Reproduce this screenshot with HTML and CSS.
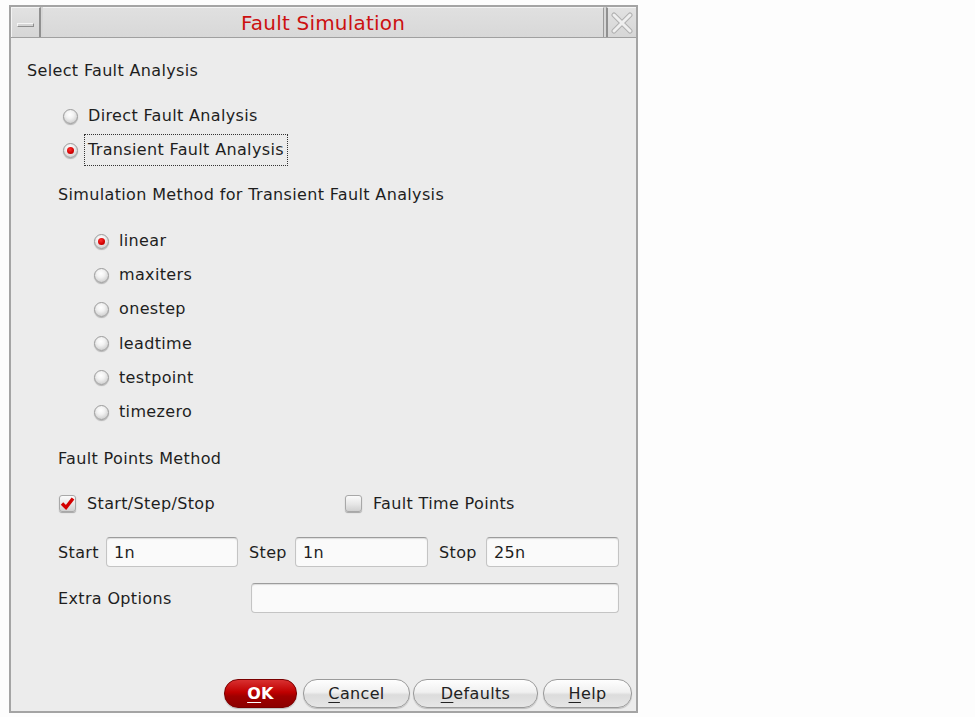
FILE: index.html
```html
<!DOCTYPE html>
<html>
<head>
<meta charset="utf-8">
<title>Fault Simulation</title>
<link rel="stylesheet" href="styles.css">
</head>
<body>
<div class="window">
  <div class="titlebar">
    <div class="tb-btn"><span class="min-glyph"></span></div>
    <div class="tb-title">Fault Simulation</div>
    <div class="tb-btn">
      <svg width="24" height="22" viewBox="0 0 24 22">
        <path d="M4 3 L20 19 M20 3 L4 19" stroke="#b0b0b0" stroke-width="5" stroke-linecap="round" fill="none"/>
        <path d="M4 3 L20 19 M20 3 L4 19" stroke="#efefef" stroke-width="3" stroke-linecap="round" fill="none"/>
      </svg>
    </div>
  </div>
  <div class="content">
    <div class="label-row">Select Fault Analysis</div>
    <div class="radio-group main">
      <div class="radio-row"><span class="radio"></span><span class="rlabel">Direct Fault Analysis</span></div>
      <div class="radio-row"><span class="radio on"></span><span class="rlabel focus">Transient Fault Analysis</span></div>
    </div>
    <div class="label-row section sim">Simulation Method for Transient Fault Analysis</div>
    <div class="radio-group sub">
      <div class="radio-row"><span class="radio on"></span><span class="rlabel">linear</span></div>
      <div class="radio-row"><span class="radio"></span><span class="rlabel">maxiters</span></div>
      <div class="radio-row"><span class="radio"></span><span class="rlabel">onestep</span></div>
      <div class="radio-row"><span class="radio"></span><span class="rlabel">leadtime</span></div>
      <div class="radio-row"><span class="radio"></span><span class="rlabel">testpoint</span></div>
      <div class="radio-row"><span class="radio"></span><span class="rlabel">timezero</span></div>
    </div>
    <div class="label-row section fpm">Fault Points Method</div>
    <div class="check-row">
      <div class="check-item first">
        <span class="check">
          <svg width="17" height="17" viewBox="0 0 17 17"><path d="M3 8.5 L7 12.5 L14 3.5" stroke="#d40000" stroke-width="3.4" fill="none" stroke-linejoin="miter"/></svg>
        </span>
        <span class="clabel">Start/Step/Stop</span>
      </div>
      <div class="check-item">
        <span class="check"></span>
        <span class="clabel">Fault Time Points</span>
      </div>
    </div>
    <div class="field-row">
      <span class="flabel l-start">Start</span><span class="input w132">1n</span>
      <span class="flabel l-step">Step</span><span class="input w133">1n</span>
      <span class="flabel l-stop">Stop</span><span class="input w133">25n</span>
    </div>
    <div class="field-row extra">
      <span class="flabel l-extra">Extra Options</span><span class="input w368"></span>
    </div>
    <div class="spacer"></div>
    <div class="buttons">
      <span class="btn ok"><u>O</u>K</span>
      <span class="btn cancel"><u>C</u>ancel</span>
      <span class="btn defaults"><u>D</u>efaults</span>
      <span class="btn help"><u>H</u>elp</span>
    </div>
  </div>
</div>
</body>
</html>
```
FILE: styles.css
```css
html, body {
  margin: 0;
  padding: 0;
  background: #fdfdfd;
}
body {
  padding: 5px 0 0 9px;
  font-family: "DejaVu Sans", Verdana, sans-serif;
  font-size: 16px;
  letter-spacing: 0.35px;
  color: #1e1e1e;
}
.window {
  width: 629px;
  height: 708px;
  box-sizing: border-box;
  border: 2px solid #a4a4a4;
  background: #ececec;
  display: flex;
  flex-direction: column;
}
.titlebar {
  height: 31px;
  display: flex;
  gap: 2px;
  background: #d6d6d6;
  border-bottom: 1px solid #a0a0a0;
  box-sizing: border-box;
}
.tb-btn {
  width: 30px;
  box-sizing: border-box;
  background: linear-gradient(#e2e2e2, #d6d6d6);
  border-top: 1px solid #f4f4f4;
  border-left: 1px solid #f4f4f4;
  border-right: 2px solid #909090;
  display: flex;
  align-items: center;
  justify-content: center;
}
.tb-btn:first-child {
  padding-top: 4px;
}
.tb-btn:last-child {
  border-left: 2px solid #909090;
  border-right: none;
}
.min-glyph {
  width: 17px;
  height: 4px;
  box-sizing: border-box;
  border: 1px solid #8e8e8e;
  border-top-color: #f6f6f6;
  border-left-color: #f6f6f6;
  background: #d4d4d4;
}
.tb-title {
  flex: 1;
  background: linear-gradient(#e0e0e0, #d8d8d8);
  border-right: 1px solid #9a9a9a;
  border-top: 1px solid #f4f4f4;
  color: #cc1010;
  font-size: 20px;
  letter-spacing: 0.2px;
  display: flex;
  align-items: center;
  justify-content: center;
}
.content {
  flex: 1;
  display: flex;
  flex-direction: column;
  padding: 22px 3px 3px 16px;
}
.label-row {
  height: 20px;
  display: flex;
  align-items: center;
}
.label-row.section {
  margin-left: 31px;
}
.label-row.sim { margin-top: 17px; }
.label-row.fpm { margin-top: 19px; }
.radio-group.main {
  margin-top: 19px;
  padding-left: 36px;
}
.radio-group.sub {
  margin-top: 20px;
  padding-left: 67px;
}
.radio-row {
  height: 34px;
  display: flex;
  align-items: center;
}
.radio-group.sub .radio-row {
  height: 34.2px;
}
.radio {
  width: 15px;
  height: 15px;
  box-sizing: border-box;
  border-radius: 50%;
  border: 1px solid #9c9c9c;
  background: radial-gradient(circle at 45% 35%, #ffffff 0%, #f2f2f2 35%, #d2d2d2 75%, #bcbcbc 100%);
  box-shadow: 0 1px 1px rgba(0,0,0,0.25);
  display: flex;
  align-items: center;
  justify-content: center;
  flex: none;
}
.radio.on::after {
  content: "";
  width: 7px;
  height: 7px;
  border-radius: 50%;
  background: radial-gradient(circle at 40% 35%, #ff3030, #d00000 60%, #a00000);
}
.rlabel {
  margin-left: 6px;
  padding: 6px 3px;
  line-height: 18px;
  border: 1px dotted transparent;
}
.rlabel.focus {
  border-color: #333;
}
.check-row {
  margin-top: 23px;
  height: 24px;
  display: flex;
  align-items: center;
  padding-left: 32px;
}
.check-item {
  display: flex;
  align-items: center;
}
.check-item.first {
  width: 286px;
}
.check {
  width: 17px;
  height: 17px;
  box-sizing: border-box;
  border-radius: 3px;
  border: 1px solid #a8a8a8;
  background: linear-gradient(#fbfbfb, #e6e6e6 55%, #d0d0d0);
  box-shadow: 0 1px 1px rgba(0,0,0,0.3);
  position: relative;
  flex: none;
}
.check svg {
  position: absolute;
  left: -1px;
  top: -1px;
}
.clabel {
  margin-left: 11px;
}
.field-row {
  margin-top: 22px;
  height: 30px;
  display: flex;
  align-items: center;
  padding-left: 31px;
}
.field-row.extra {
  margin-top: 16px;
}
.flabel {
  box-sizing: border-box;
}
.l-start { width: 48px; }
.l-step { width: 46px; margin-left: 11px; }
.l-stop { width: 47px; margin-left: 11px; }
.l-extra { width: 193px; }
.input {
  height: 30px;
  box-sizing: border-box;
  border: 1px solid #c4c4c4;
  border-top-color: #9c9c9c;
  border-radius: 4px;
  background: #fafafa;
  box-shadow: inset 0 1px 1px rgba(0,0,0,0.12);
  padding-left: 7px;
  display: flex;
  align-items: center;
}
.w132 { width: 132px; }
.w133 { width: 133px; }
.w368 { width: 368px; }
.spacer { flex: 1; }
.buttons {
  display: flex;
  justify-content: flex-end;
  gap: 5px;
  height: 29px;
  padding-right: 1px;
}
.btn {
  height: 29px;
  box-sizing: border-box;
  border-radius: 14px;
  border: 1px solid #9a9a9a;
  background: linear-gradient(#fefefe, #f0f0f0 45%, #dcdcdc 55%, #e6e6e6);
  box-shadow: 0 1px 1px rgba(0,0,0,0.2);
  display: flex;
  align-items: center;
  justify-content: center;
  color: #222;
}
.btn u {
  text-underline-offset: 3px;
}
.btn.ok {
  width: 73px;
  border-color: #7a0000;
  background: linear-gradient(#d83030, #c00000 45%, #a00000 60%, #8c0000);
  color: #fff;
  font-weight: bold;
}
.btn.cancel { width: 107px; margin-left: 1px; }
.btn.defaults { width: 125px; margin-left: -2px; }
.btn.help { width: 89px; }
```
